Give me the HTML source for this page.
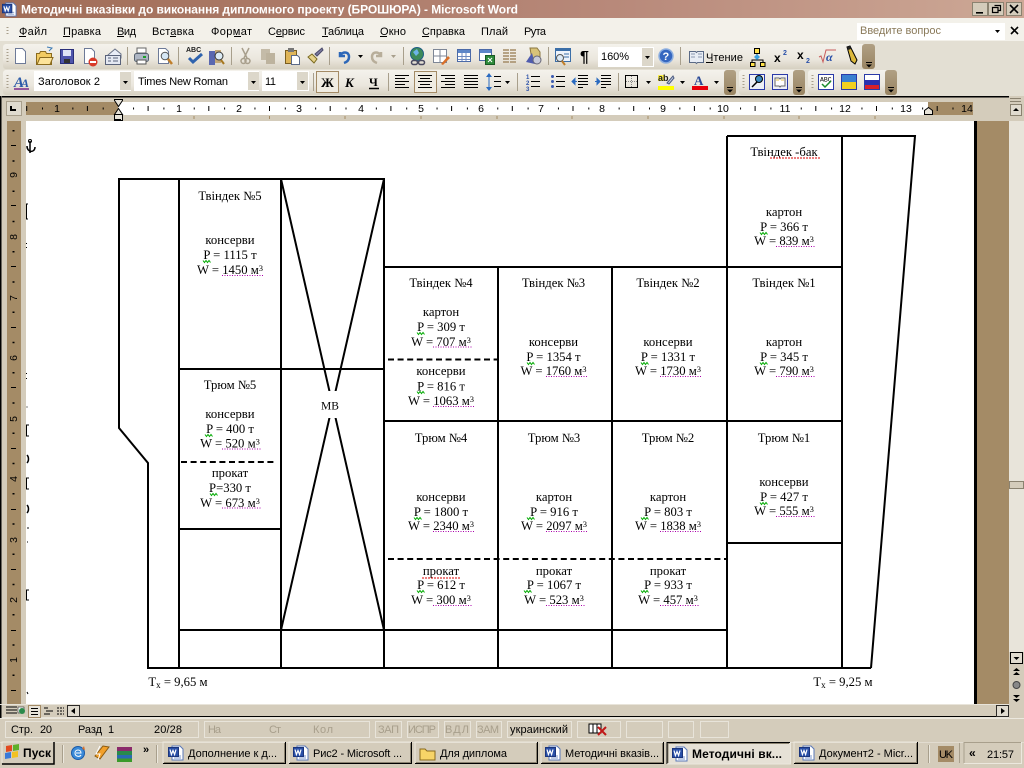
<!DOCTYPE html>
<html><head><meta charset="utf-8"><style>
html,body{margin:0;padding:0;background:#d4ccbb;width:1024px;height:768px;overflow:hidden}
svg{display:block}
.u{font-family:"Liberation Sans",sans-serif;font-size:11px;fill:#000}
.d{font-family:"Liberation Serif",serif;font-size:12.7px;fill:#000;text-anchor:middle}
.d tspan.s{font-size:8.5px}
.l{stroke:#000;stroke-width:2;fill:none}
.pd{stroke:#a0a;stroke-width:1;stroke-dasharray:1 1.5;fill:none}
.dg{stroke:#000;stroke-width:2;stroke-dasharray:6 3.6;fill:none}
.p{fill:none;stroke:#e8e4da;stroke-width:1}
.r{font-family:"Liberation Sans",sans-serif;font-size:10.5px;fill:#000;text-anchor:middle}
</style></head><body>
<svg width="1024" height="768" viewBox="0 0 1024 768" xmlns="http://www.w3.org/2000/svg">
<defs>
<linearGradient id="tt" x1="0" x2="1" y1="0" y2="0"><stop offset="0" stop-color="#a06c56"/><stop offset=".6" stop-color="#b8897a"/><stop offset="1" stop-color="#cda896"/></linearGradient>
<linearGradient id="tb" x1="0" x2="0" y1="0" y2="1"><stop offset="0" stop-color="#f4f2ec"/><stop offset=".6" stop-color="#ebe7de"/><stop offset="1" stop-color="#d6d0c1"/></linearGradient>
<linearGradient id="gr" x1="0" x2="0" y1="0" y2="1"><stop offset="0" stop-color="#b0a084"/><stop offset="1" stop-color="#998462"/></linearGradient>
<symbol id="w" viewBox="0 0 16 16" overflow="visible"><path d="M4 1h8l3 3v11H4z" fill="#fff" stroke="#5a78b8"/><path d="M6 11h7M6 13h7" stroke="#7d97cc"/><rect x="0.5" y="2.5" width="10" height="9" fill="#2a50a8" stroke="#1b357c"/><path d="M2 4.5l1.4 5 1.6-4 1.6 4 1.4-5" fill="none" stroke="#fff" stroke-width="1.2"/></symbol>
<symbol id="dd" viewBox="0 0 5 3" overflow="visible"><path d="M0 0h5L2.5 3z" fill="#000"/></symbol>
<symbol id="s" viewBox="0 0 8 3" overflow="visible"><path d="M0 .5l1.5 2 1.5-2 1.5 2 1.5-2 1.5 2" fill="none" stroke="#0a0" stroke-width="1"/></symbol>
</defs>

<rect width="1024" height="768" fill="#d4ccbb"/>

<!-- Title bar -->
<rect width="1024" height="18" fill="url(#tt)"/>
<use href="#w" x="2" y="2" width="15" height="15"/>
<text x="21" y="13.5" textLength="497" lengthAdjust="spacing" style="font:bold 12px 'Liberation Sans',sans-serif;fill:#fff">Методичні вказівки до виконання дипломного проекту (БРОШЮРА) - Microsoft Word</text>
<g>
<rect x="972.5" y="2.5" width="15" height="13" fill="#d4ccbb" stroke="#8a8270"/><path d="M976 12h7v1.6h-7z"/>
<rect x="988.5" y="2.5" width="15" height="13" fill="#d4ccbb" stroke="#8a8270"/><path d="M994.5 5.5h6v5h-2M992.5 7.5h5.5v5h-5.5z" fill="none" stroke="#000" stroke-width="1.2"/>
<rect x="1006.5" y="2.5" width="15" height="13" fill="#d4ccbb" stroke="#8a8270"/><path d="M1010 5l8 8M1018 5l-8 8" stroke="#000" stroke-width="1.6"/>
</g>

<!-- Menu -->
<rect y="18" width="1024" height="26" fill="#f3f1ea"/>
<rect x="0" y="41" width="1024" height="56" fill="#e3dfd3"/>
<path d="M7.5 27v1M7.5 30v1M7.5 33v1" stroke="#a89f8c" stroke-width="2"/>
<g>
<text x="19" y="35" textLength="28" class="u">Файл</text><path d="M19 36.500h7" stroke="#000"/>
<text x="63" y="35" textLength="38" class="u">Правка</text><path d="M63 36.500h7" stroke="#000"/>
<text x="117" y="35" textLength="19" class="u">Вид</text><path d="M117 36.500h7" stroke="#000"/>
<text x="152" y="35" textLength="42" class="u">Вставка</text><path d="M170 36.500h6" stroke="#000"/>
<text x="211" y="35" textLength="41" class="u">Формат</text><path d="M234 36.500h7" stroke="#000"/>
<text x="268" y="35" textLength="37" class="u">Сервис</text><path d="M276 36.500h6" stroke="#000"/>
<text x="322" y="35" textLength="42" class="u">Таблица</text><path d="M322 36.500h6" stroke="#000"/>
<text x="380" y="35" textLength="26" class="u">Окно</text><path d="M380 36.500h7" stroke="#000"/>
<text x="422" y="35" textLength="43" class="u">Справка</text><path d="M422 36.500h7" stroke="#000"/>
<text x="481" y="35" textLength="27" class="u">Плай</text>
<text x="524" y="35" textLength="22" class="u">Рута</text>
</g>
<rect x="857" y="23" width="148" height="17" fill="#fff"/>
<text x="860" y="34" textLength="81" style="font:11px 'Liberation Sans',sans-serif;fill:#8a7a5a">Введите вопрос</text>
<use href="#dd" x="995" y="30" width="5" height="3"/>
<path d="M1011 27l7 7M1018 27l-7 7" stroke="#000" stroke-width="1.6"/>

<!-- Toolbar 1 -->
<rect x="3" y="44" width="868" height="25" rx="3" fill="url(#tb)"/>
<rect x="862" y="44" width="13" height="25" rx="3" fill="url(#gr)"/>
<path d="M7.500 49v1M7.500 52v1M7.500 55v1M7.500 58v1M7.500 61v1" stroke="#a89f8c" stroke-width="2"/>
<path d="M866 62h6v1h-6zM866 64.500h6l-3 3z" fill="#000"/>
<!-- new -->
<path d="M15.500 48.500h7l3 3v12h-10z" fill="#fff" stroke="#6d7a98"/>
<!-- open -->
<path d="M36.500 53.500h3l1-2h5l1 2h5v11h-15z" fill="#f2cb62" stroke="#8a6a1e"/><path d="M37 64.500l3-7h13l-3 7z" fill="#fce39a" stroke="#8a6a1e"/><path d="M47 47l5 1-3 3" fill="none" stroke="#3b7ab5"/>
<!-- save -->
<rect x="60.500" y="49.500" width="13" height="14" fill="#4f55ac" stroke="#2a2f7a"/><rect x="63" y="50" width="8" height="6" fill="#dfe3f5"/><rect x="64" y="59" width="6" height="4" fill="#333"/>
<!-- permission -->
<path d="M84.500 48.500h7l3 3v12h-10z" fill="#fff" stroke="#6d7a98"/><circle cx="93" cy="62" r="4.500" fill="#d83a28"/><rect x="90" y="61" width="6" height="2" fill="#fff"/>
<!-- mail -->
<path d="M108 55l7-6 6 5v4h-13z" fill="#e9edf7" stroke="#6a7388"/><rect x="105.500" y="55.500" width="15" height="9" fill="#e4e8f2" stroke="#59627a"/><path d="M108 58h3M108 61h3M113 58h5M113 61h5" stroke="#59627a"/>
<path d="M127.500 47v18M178.500 47v18M231.500 47v18M329.500 47v18M403.500 47v18M548.500 47v18M680.500 47v18" stroke="#a89f8c"/>
<!-- print -->
<rect x="137" y="48" width="9" height="5" fill="#fff" stroke="#666"/><rect x="134.500" y="53.500" width="14" height="8" rx="2" fill="#aeb6c4" stroke="#55606e"/><rect x="137" y="60" width="9" height="4" fill="#fff" stroke="#555"/><rect x="143" y="56" width="3" height="2" fill="#1ca02a"/>
<!-- preview -->
<path d="M158.500 48.500h7l3 3v12h-10z" fill="#fff" stroke="#6d7a98"/><circle cx="165" cy="56" r="3.800" fill="#d6e7f5" stroke="#555"/><path d="M168 59l4 5" stroke="#c07e2a" stroke-width="2.500"/>
<!-- spell -->
<text x="186" y="52" style="font:bold 7px 'Liberation Sans',sans-serif;fill:#222">ABC</text><path d="M189 58l4 4 9-8" fill="none" stroke="#2f63ae" stroke-width="3"/>
<!-- research -->
<rect x="209" y="51" width="6" height="14" fill="#5a68b0"/><rect x="215" y="50" width="6" height="13" fill="#c3a878"/><circle cx="219" cy="56" r="4" fill="#dcebf5" stroke="#333"/><path d="M221 60l3 4" stroke="#a67820" stroke-width="2"/>
<!-- cut -->
<path d="M242 48l5 10M249 48l-5 10" stroke="#a89f8c" stroke-width="1.500"/><circle cx="243.500" cy="61" r="2.500" fill="none" stroke="#a89f8c" stroke-width="1.500"/><circle cx="247.500" cy="61" r="2.500" fill="none" stroke="#a89f8c" stroke-width="1.500"/>
<!-- copy -->
<rect x="261" y="49" width="9" height="11" fill="#c4bba8"/><rect x="266" y="53" width="9" height="11" fill="#bdb39e"/>
<!-- paste -->
<rect x="285.500" y="50.500" width="11" height="13" fill="#dfb558" stroke="#7a5e20"/><rect x="288" y="48" width="6" height="4" fill="#777"/><path d="M291.500 55.500h6l2 2v7h-8z" fill="#fff" stroke="#5c6a88"/>
<!-- format painter -->
<path d="M308 57l6 6 3-4-5-5z" fill="#e6d28a" stroke="#7a6a20"/><path d="M315 54l7-6 1 2-6 6z" fill="#7d7ca0" stroke="#4a4a6a"/>
<!-- undo -->
<path d="M340 52v4h5M340 55c4-4 9-3 9 2 0 3-2 5-5 6" fill="none" stroke="#2c67b8" stroke-width="2.500"/>
<use href="#dd" x="358" y="55" width="5" height="3"/>
<path d="M381 52v4h-5M381 55c-4-4-9-3-9 2 0 3 2 5 5 6" fill="none" stroke="#b8ae9a" stroke-width="2.500"/>
<path d="M391 55h5l-2.500 3z" fill="#a89f8c"/>
<!-- hyperlink -->
<circle cx="417" cy="54" r="6.500" fill="#3d8a5a" stroke="#1e5e86"/><path d="M413 52l4-3 2 4-3 3z" fill="#6db4e8"/><rect x="411.500" y="60.500" width="6" height="4" rx="2" fill="none" stroke="#4a4a60" stroke-width="1.500"/><rect x="418.500" y="60.500" width="6" height="4" rx="2" fill="none" stroke="#4a4a60" stroke-width="1.500"/>
<!-- draw table -->
<rect x="433.500" y="49.500" width="13" height="13" fill="#fff" stroke="#7d8696"/><path d="M433 56h13M440 49v13" stroke="#7d8696"/><path d="M441 64l7-8 2 2-7 7z" fill="#d9702a"/>
<!-- table -->
<rect x="457.500" y="49.500" width="13" height="12" fill="#fff" stroke="#4b6aa8"/><rect x="458" y="50" width="12" height="3" fill="#5d86c8"/><path d="M458 56.500h12M458 59.500h12M462 53v8M466 53v8" stroke="#6d8ac0"/>
<!-- excel -->
<rect x="479.500" y="49.500" width="12" height="11" fill="#fff" stroke="#4b6aa8"/><rect x="480" y="50" width="11" height="3" fill="#5d86c8"/><rect x="485.500" y="55.500" width="9" height="9" fill="#2e8b3a" stroke="#1a5a24"/><path d="M488 58l4 4M492 58l-4 4" stroke="#fff"/>
<!-- columns -->
<path d="M503 50h6M503 53h6M503 56h6M503 59h6M503 62h6M510 50h6M510 53h6M510 56h6M510 59h6M510 62h6" stroke="#a48b66" stroke-width="1.500"/>
<!-- drawing -->
<path d="M530 48l7 0 3 4v8h-8z" fill="#d8c278" stroke="#8a7640"/><path d="M526 62l6-9 3 11z" fill="#4f5cae"/><circle cx="537" cy="60" r="4" fill="#c8cbda" stroke="#667"/>
<!-- doc map -->
<rect x="555.500" y="48.500" width="15" height="13" fill="#eef3fa" stroke="#3c6fa8"/><rect x="556" y="49" width="14" height="2" fill="#3c6fa8"/><path d="M564 54h5M564 57h5" stroke="#3c6fa8"/><circle cx="560" cy="58" r="3.500" fill="#dceaf6" stroke="#555"/><path d="M562 61l3 4" stroke="#c07e2a" stroke-width="2"/>
<!-- pilcrow -->
<text x="580" y="62" style="font:bold 16px 'Liberation Sans',sans-serif;fill:#000">¶</text>
<!-- zoom box -->
<rect x="598" y="47" width="56" height="20" fill="#fff"/><rect x="642" y="48" width="11" height="18" fill="#dcd7ca"/>
<text x="601" y="60" textLength="28" class="u">160%</text>
<use href="#dd" x="645" y="56" width="5" height="3"/>
<!-- help -->
<circle cx="666" cy="56" r="7" fill="#3567c0" stroke="#8fb0e0" stroke-width="1.500"/><text x="662.500" y="60" style="font:bold 11px 'Liberation Sans',sans-serif;fill:#fff">?</text>
<!-- read -->
<path d="M689.500 51.500h6l1 1 1-1h6v11h-6l-1 1-1-1h-6z" fill="#e8edf5" stroke="#5a6a86"/><path d="M691 54h4M691 57h4M698 54h4M698 57h4" stroke="#8a98ae"/>
<text x="706" y="61" textLength="37" class="u">Чтение</text><path d="M706 62.500h7" stroke="#000"/>
<!-- diagram -->
<path d="M757 53v5M752 63v-3h11v3" fill="none" stroke="#000"/><rect x="754.500" y="48.500" width="5" height="5" fill="#ffe14a" stroke="#000"/><rect x="750.500" y="62.500" width="4.500" height="4" fill="#ffe14a" stroke="#000"/><rect x="760.500" y="62.500" width="4.500" height="4" fill="#ffe14a" stroke="#000"/><path d="M757 54l3 3-3 3-3-3z" fill="#3aa0e0"/>
<!-- x2 -->
<text x="774" y="62" style="font:bold 12px 'Liberation Sans',sans-serif">x</text><text x="783" y="55" style="font:bold 7px 'Liberation Sans',sans-serif;fill:#2a50a8">2</text>
<text x="797" y="59" style="font:bold 12px 'Liberation Sans',sans-serif">x</text><text x="806" y="63" style="font:bold 7px 'Liberation Sans',sans-serif;fill:#2a50a8">2</text>
<!-- sqrt -->
<path d="M819 57l2-1 2 6 3-12h10" fill="none" stroke="#c85c5c"/><text x="826" y="61" style="font:italic bold 12px 'Liberation Serif',serif;fill:#2a50a8">α</text>
<!-- pencil -->
<path d="M847 47l3-1 7 14-2 4-4-3z" fill="#dcb83c" stroke="#000"/><path d="M847 47l3-1 1 3-3 1z" fill="#222"/>

<!-- Toolbar 2a -->
<rect x="3" y="70" width="729" height="25" rx="3" fill="url(#tb)"/>
<rect x="724" y="70" width="12" height="25" rx="3" fill="url(#gr)"/>
<path d="M727 87h6v1h-6zM727 89.500h6l-3 3z" fill="#000"/>
<path d="M7.500 75v1M7.500 78v1M7.500 81v1M7.500 84v1M7.500 87v1" stroke="#a89f8c" stroke-width="2"/>
<text x="14" y="87" style="font:italic bold 15px 'Liberation Serif',serif;fill:#2a5aa8">A</text><text x="21" y="87" style="font:italic bold 12px 'Liberation Serif',serif;fill:#2a5aa8">A</text><path d="M14 89h15" stroke="#7a2a8a" stroke-width="1.500"/>
<rect x="34" y="71" width="97" height="20" fill="#fff"/><rect x="120" y="72" width="11" height="18" fill="#dcd7ca"/>
<rect x="134" y="71" width="125" height="20" fill="#fff"/><rect x="248" y="72" width="11" height="18" fill="#dcd7ca"/>
<rect x="262" y="71" width="47" height="20" fill="#fff"/><rect x="297" y="72" width="11" height="18" fill="#dcd7ca"/>
<use href="#dd" x="123" y="81" width="5" height="3"/><use href="#dd" x="251" y="81" width="5" height="3"/><use href="#dd" x="300" y="81" width="5" height="3"/>
<text x="38" y="85" textLength="62" class="u">Заголовок 2</text>
<text x="138" y="85" textLength="90" class="u">Times New Roman</text>
<text x="265" y="85" textLength="11" class="u">11</text>
<path d="M313.500 73v18M388.500 73v18M517.500 73v18M618.500 73v18" stroke="#a89f8c"/>
<rect x="316.500" y="71.500" width="22" height="21" fill="#f0ece2" stroke="#a48b66"/>
<text x="321" y="87" style="font:bold 13px 'Liberation Serif',serif">Ж</text>
<text x="345" y="87" style="font:italic bold 13px 'Liberation Serif',serif">К</text>
<text x="369" y="86" style="font:bold 12px 'Liberation Serif',serif">Ч</text><path d="M369 88.500h10" stroke="#000" stroke-width="1.500"/>
<path d="M395 75.500h14M395 78.500h10M395 81.500h14M395 84.500h10M395 87.500h14" stroke="#000"/>
<rect x="414.500" y="71.500" width="22" height="21" fill="#f0ece2" stroke="#a48b66"/>
<path d="M418 75.500h14M420 78.500h10M418 81.500h14M420 84.500h10M418 87.500h14" stroke="#000"/>
<path d="M441 75.500h14M445 78.500h10M441 81.500h14M445 84.500h10M441 87.500h14" stroke="#000"/>
<path d="M464 75.500h14M464 78.500h14M464 81.500h14M464 84.500h14M464 87.500h14" stroke="#000"/>
<path d="M489 73l3 4h-6zM489 91l3-4h-6z" fill="#2a6ac0"/><path d="M489 76v12" stroke="#2a6ac0"/><path d="M494 76.500h7M494 81.500h7M494 86.500h7" stroke="#000"/>
<use href="#dd" x="505" y="81" width="5" height="3"/>
<text x="526" y="79" style="font:bold 6px 'Liberation Sans',sans-serif;fill:#2a50a8">1</text><text x="526" y="85" style="font:bold 6px 'Liberation Sans',sans-serif;fill:#2a50a8">2</text><text x="526" y="91" style="font:bold 6px 'Liberation Sans',sans-serif;fill:#2a50a8">3</text>
<path d="M531 76.500h9M531 81.500h9M531 86.500h9" stroke="#000"/>
<circle cx="552.500" cy="76.500" r="1.500" fill="#3a5ab0"/><circle cx="552.500" cy="81.500" r="1.500" fill="#3a5ab0"/><circle cx="552.500" cy="86.500" r="1.500" fill="#3a5ab0"/>
<path d="M556 76.500h9M556 81.500h9M556 86.500h9" stroke="#000"/>
<path d="M578 75.500h10M578 78.500h10M578 81.500h10M578 84.500h10M578 87.500h5" stroke="#000"/><path d="M572 81.500h5M572 81.500l3-3v6z" stroke="#2a6ac0" fill="#2a6ac0"/>
<path d="M601 75.500h10M601 78.500h10M601 81.500h10M601 84.500h10M601 87.500h5" stroke="#000"/><path d="M595 81.500h5M600 81.500l-3-3v6z" stroke="#2a6ac0" fill="#2a6ac0"/>
<rect x="625.500" y="75.500" width="12" height="12" fill="none" stroke="#000"/><path d="M631.500 76v11M626 81.500h11" stroke="#888" stroke-dasharray="1 1"/>
<use href="#dd" x="646" y="81" width="5" height="3"/>
<rect x="658" y="75" width="7" height="6" fill="#fff24a"/><text x="658" y="81" style="font:bold 9px 'Liberation Sans',sans-serif;fill:#222">ab</text><path d="M667 83l6-7 1 2-5 6z" fill="#c5cde0" stroke="#4a5a80"/><rect x="658" y="86" width="16" height="4" fill="#ffff00"/>
<use href="#dd" x="680" y="81" width="5" height="3"/>
<text x="694" y="85" style="font:bold 13px 'Liberation Serif',serif;fill:#2a4a98">A</text><rect x="692" y="86" width="16" height="4" fill="#e8000c"/>
<use href="#dd" x="714" y="81" width="5" height="3"/>

<!-- Toolbar 2b -->
<rect x="739" y="70" width="62" height="25" rx="3" fill="url(#tb)"/>
<rect x="793" y="70" width="12" height="25" rx="3" fill="url(#gr)"/>
<path d="M796 87h6v1h-6zM796 89.500h6l-3 3z" fill="#000"/>
<path d="M743.500 75v1M743.500 78v1M743.500 81v1M743.500 84v1M743.500 87v1" stroke="#a89f8c" stroke-width="2"/>
<rect x="749.500" y="74.500" width="15" height="15" fill="#eef0f5" stroke="#2a3aa8"/><circle cx="759" cy="79" r="3.500" fill="#3a8ac0" stroke="#000"/><path d="M752 87l5-5" stroke="#000" stroke-width="1.500"/>
<rect x="772.500" y="74.500" width="15" height="15" fill="#eef0f5" stroke="#2a3aa8"/><path d="M775 78h4l1 1 1-1h4v8h-4l-1 1-1-1h-4z" fill="#fff" stroke="#666"/><path d="M776 80h3M781 80h3" stroke="#e3c040"/>

<!-- Toolbar 2c -->
<rect x="808" y="70" width="85" height="25" rx="3" fill="url(#tb)"/>
<rect x="885" y="70" width="12" height="25" rx="3" fill="url(#gr)"/>
<path d="M888 87h6v1h-6zM888 89.500h6l-3 3z" fill="#000"/>
<path d="M812.500 75v1M812.500 78v1M812.500 81v1M812.500 84v1M812.500 87v1" stroke="#a89f8c" stroke-width="2"/>
<rect x="818.500" y="74.500" width="15" height="15" fill="#fff" stroke="#2a3aa8"/><text x="820" y="81.500" style="font:6.500px 'Liberation Mono',monospace">ABC</text><path d="M822 84l3 3 6-6" fill="none" stroke="#1a8a2a" stroke-width="1.500"/>
<rect x="841.500" y="74.500" width="15" height="15" fill="#f2d020" stroke="#2a3aa8"/><rect x="842" y="75" width="14" height="7" fill="#3a80d0"/>
<rect x="864.500" y="74.500" width="15" height="15" fill="#fff" stroke="#2a3aa8"/><rect x="865" y="80" width="14" height="5" fill="#2a30b0"/><rect x="865" y="85" width="14" height="4" fill="#d8202a"/>

<!-- Ruler band -->
<rect x="0" y="96" width="1024" height="25" fill="#d4ccbb"/>
<rect x="2" y="96" width="1007" height="1.500" fill="#000"/>
<rect x="0" y="96" width="1.500" height="622" fill="#000"/>
<rect x="6.500" y="101.500" width="15" height="14" fill="#e0dbcf" stroke="#a89f8c"/><path d="M11 106v4h5" fill="none" stroke="#000" stroke-width="2"/>
<rect x="26" y="102" width="947" height="13" fill="#fff"/>
<rect x="26" y="102" width="92" height="13" fill="#a48b66"/>
<rect x="928" y="102" width="45" height="13" fill="#a48b66"/>
<path d="M42 108.500H970" stroke="#000" stroke-width="2" stroke-dasharray="1 29.350"/>
<path d="M26.700 106V111M87.400 106V111M148.100 106V111M208.800 106V111M269.500 106V111M330.200 106V111M390.900 106V111M451.600 106V111M512.300 106V111M573 106V111M633.700 106V111M694.400 106V111M755.100 106V111M815.800 106V111M876.500 106V111M937.200 106V111" stroke="#000"/>
<path d="M194 116V119M269.500 116V119M345 116V119M421 116V119M497 116V119M572 116V119M648 116V119M724 116V119M799 116V119M875 116V119" stroke="#a48b66"/>
<g>
<text x="57" y="112" class="r">1</text><text x="179" y="112" class="r">1</text><text x="239" y="112" class="r">2</text><text x="299" y="112" class="r">3</text><text x="361" y="112" class="r">4</text><text x="421" y="112" class="r">5</text><text x="481" y="112" class="r">6</text><text x="541" y="112" class="r">7</text><text x="602" y="112" class="r">8</text><text x="663" y="112" class="r">9</text><text x="723" y="112" class="r">10</text><text x="785" y="112" class="r">11</text><text x="845" y="112" class="r">12</text><text x="906" y="112" class="r">13</text><text x="967" y="112" class="r">14</text>
</g>
<path d="M114.500 99.500h8v1l-4 6-4-6zM114.500 114.500l4-6 4 6z" fill="#e8e4da" stroke="#000"/><rect x="114.500" y="114.500" width="8" height="6" fill="#e8e4da" stroke="#000"/>
<path d="M924.500 114.500v-4l4-3 4 3v4z" fill="#e8e4da" stroke="#000"/>
<rect x="115" y="119" width="6" height="2" fill="#000"/>

<!-- Left ruler -->
<rect x="7" y="121" width="14" height="583" fill="#a48b66"/>
<path d="M13.500 130V700" stroke="#000" stroke-width="2" stroke-dasharray="1.500 28.750"/>
<path d="M11 145.500h5M11 205.500h5M11 266.500h5M11 327.500h5M11 387.500h5M11 448.500h5M11 509.500h5M11 569.500h5M11 630.500h5M11 690.500h5" stroke="#000"/>
<g>
<text transform="translate(17,175) rotate(-90)" class="r">9</text><text transform="translate(17,237) rotate(-90)" class="r">8</text><text transform="translate(17,298) rotate(-90)" class="r">7</text><text transform="translate(17,358) rotate(-90)" class="r">6</text><text transform="translate(17,419) rotate(-90)" class="r">5</text><text transform="translate(17,479) rotate(-90)" class="r">4</text><text transform="translate(17,540) rotate(-90)" class="r">3</text><text transform="translate(17,600) rotate(-90)" class="r">2</text><text transform="translate(17,660) rotate(-90)" class="r">1</text>
</g>

<!-- Page -->
<rect x="26" y="121" width="948" height="583" fill="#fff"/>
<rect x="974" y="121" width="3" height="583" fill="#000"/>
<rect x="977" y="121" width="32" height="583" fill="#a48b66"/>

<!-- left margin fragments -->
<path d="M30 141v12M27 146c0 7 8 7 8 1" fill="none" stroke="#000" stroke-width="1.500"/><circle cx="30" cy="141" r="1.500" fill="none" stroke="#000"/>
<path d="M28 204h-1.500v15H28M26.500 243v1M26.500 247v1M26.500 373v1M26.500 378v1M26.500 407h1M29 425h-2.500v11H29M29 478h-2.500v11H29M29 590h-2.500v10H29" fill="none" stroke="#000"/>
<path d="M27 455c2 2 2 6 0 8M27 505c2 2 2 6 0 8" fill="none" stroke="#000" stroke-width="1.500"/>
<path d="M27 528h2" stroke="#888" stroke-width="2"/><path d="M27 542h1M27 692l1 2" stroke="#000"/>

<!-- Diagram -->
<g class="l">
<path d="M179 179H119V428L148 463V668H179"/>
<path d="M179 179H384V668M179 179V668M281 179V668"/>
<path d="M179 369H384M179 529H281M179 630H727M148 668H871"/>
<path d="M281 179L384 630M384 179L281 630"/>
</g>
<rect x="316" y="391" width="32" height="27" fill="#fff"/>
<text x="330" y="409.500" class="d" style="font-size:11.500px">МВ</text>
<g class="l">
<path d="M384 267H842M384 421H842M498 267V668M612 267V668M727 136V668M842 136V668M727 136H915L871 668M727 543H842"/>
</g>
<path class="dg" d="M181 462H277M388 359.500H497M388 559H727"/>

<g>
<text x="230" y="200" class="d">Твіндек №5</text><text x="230" y="244" class="d">консерви</text><text x="230" y="259" class="d">P = 1115 т</text><text x="230" y="274" class="d">W = 1450 м<tspan class="s" dy="-3">3</tspan></text>
<text x="230" y="389" class="d">Трюм №5</text><text x="230" y="418" class="d">консерви</text><text x="230" y="433" class="d">P = 400 т</text><text x="230" y="447.500" class="d">W = 520 м<tspan class="s" dy="-3">3</tspan></text>
<text x="230" y="477" class="d">прокат</text><text x="230" y="492" class="d">Р=330 т</text><text x="230" y="507" class="d">W = 673 м<tspan class="s" dy="-3">3</tspan></text>

<text x="441" y="287" class="d">Твіндек №4</text><text x="441" y="316" class="d">картон</text><text x="441" y="331" class="d">P = 309 т</text><text x="441" y="346" class="d">W = 707 м<tspan class="s" dy="-3">3</tspan></text>
<text x="441" y="375" class="d">консерви</text><text x="441" y="390.500" class="d">P = 816 т</text><text x="441" y="405" class="d">W = 1063 м<tspan class="s" dy="-3">3</tspan></text>

<text x="553.500" y="287" class="d">Твіндек №3</text><text x="553.500" y="346" class="d">консерви</text><text x="553.500" y="361" class="d">P = 1354 т</text><text x="553.500" y="375" class="d">W = 1760 м<tspan class="s" dy="-3">3</tspan></text>
<text x="668" y="287" class="d">Твіндек №2</text><text x="668" y="346" class="d">консерви</text><text x="668" y="361" class="d">P = 1331 т</text><text x="668" y="375" class="d">W = 1730 м<tspan class="s" dy="-3">3</tspan></text>
<text x="784" y="287" class="d">Твіндек №1</text><text x="784" y="346" class="d">картон</text><text x="784" y="361" class="d">P = 345 т</text><text x="784" y="375" class="d">W = 790 м<tspan class="s" dy="-3">3</tspan></text>
<text x="784" y="156" class="d">Твіндек -бак</text><text x="784" y="216" class="d">картон</text><text x="784" y="231" class="d">P = 366 т</text><text x="784" y="245" class="d">W = 839 м<tspan class="s" dy="-3">3</tspan></text>

<text x="441" y="442" class="d">Трюм №4</text><text x="441" y="501" class="d">консерви</text><text x="441" y="516" class="d">P = 1800 т</text><text x="441" y="530" class="d">W = 2340 м<tspan class="s" dy="-3">3</tspan></text>
<text x="441" y="575" class="d">прокат</text><text x="441" y="589" class="d">P = 612 т</text><text x="441" y="604" class="d">W = 300 м<tspan class="s" dy="-3">3</tspan></text>
<text x="554" y="442" class="d">Трюм №3</text><text x="554" y="501" class="d">картон</text><text x="554" y="516" class="d">P = 916 т</text><text x="554" y="530" class="d">W = 2097 м<tspan class="s" dy="-3">3</tspan></text>
<text x="554" y="575" class="d">прокат</text><text x="554" y="589" class="d">P = 1067 т</text><text x="554" y="604" class="d">W = 523 м<tspan class="s" dy="-3">3</tspan></text>
<text x="668" y="442" class="d">Трюм №2</text><text x="668" y="501" class="d">картон</text><text x="668" y="516" class="d">P = 803 т</text><text x="668" y="530" class="d">W = 1838 м<tspan class="s" dy="-3">3</tspan></text>
<text x="668" y="575" class="d">прокат</text><text x="668" y="589" class="d">P = 933 т</text><text x="668" y="604" class="d">W = 457 м<tspan class="s" dy="-3">3</tspan></text>
<text x="784" y="442" class="d">Трюм №1</text><text x="784" y="486" class="d">консерви</text><text x="784" y="501" class="d">P = 427 т</text><text x="784" y="515" class="d">W = 555 м<tspan class="s" dy="-3">3</tspan></text>

<text x="178" y="686" class="d">Т<tspan style="font-size:9px" dy="2">х</tspan><tspan dy="-2"> = 9,65 м</tspan></text>
<text x="843" y="686" class="d">Т<tspan style="font-size:9px" dy="2">х</tspan><tspan dy="-2"> = 9,25 м</tspan></text>
</g>

<!-- spelling squiggles -->
<use href="#s" x="203" y="260" width="8" height="3"/><use href="#s" x="205" y="434" width="8" height="3"/><use href="#s" x="210" y="493" width="8" height="3"/>
<use href="#s" x="417" y="332" width="8" height="3"/><use href="#s" x="417" y="391" width="8" height="3"/><use href="#s" x="527" y="362" width="8" height="3"/><use href="#s" x="641" y="362" width="8" height="3"/><use href="#s" x="760" y="362" width="8" height="3"/><use href="#s" x="760" y="232" width="8" height="3"/>
<use href="#s" x="414" y="517" width="8" height="3"/><use href="#s" x="417" y="590" width="8" height="3"/><use href="#s" x="527" y="517" width="8" height="3"/><use href="#s" x="524" y="590" width="8" height="3"/><use href="#s" x="641" y="517" width="8" height="3"/><use href="#s" x="641" y="590" width="8" height="3"/><use href="#s" x="760" y="502" width="8" height="3"/>
<path class="pd" d="M222 275.500H263M222 449H261M222 508H261M433 347H472M433 406.500H474M546 376.500H587M660 376.500H701M776 376.500H815M776 246.500H815M433 531.500H474M433 605.500H472M546 531.500H587M546 605.500H585M660 531.500H701M660 605.500H699M776 516.500H815"/>
<path d="M422 578h38M770 158h50" stroke="#d00" stroke-dasharray="2 1"/>

<!-- Vertical scrollbar -->
<rect x="1009" y="121" width="15" height="583" fill="#e8e4da"/>
<rect x="1009" y="97" width="15" height="24" fill="#d4ccbb"/>
<path d="M1010 98.500h11M1010 101.500h11" stroke="#8a8270"/>
<rect x="1010.500" y="104.500" width="11" height="11" fill="#e0dbcf" stroke="#8a8270"/><path d="M1016 108l3 3h-6z"/>
<rect x="1009.500" y="481.500" width="14" height="7" fill="#d4ccbb" stroke="#8a8270"/>
<rect x="1009" y="652" width="15" height="52" fill="#d4ccbb"/>
<rect x="1010.500" y="652.500" width="12" height="11" fill="#e0dbcf" stroke="#000"/><path d="M1016.500 660l3-3h-6z"/>
<path d="M1013 675h7M1016.500 668l3.500 3h-7zM1016.500 672l3.500 3h-7z" fill="#000"/>
<circle cx="1016.500" cy="685" r="3.500" fill="#888" stroke="#444"/>
<path d="M1013 695h7M1016.500 702l3.500-3h-7zM1016.500 698l3.500-3h-7z" fill="#000"/>

<!-- Horizontal scrollbar -->
<rect x="2" y="704" width="1007" height="14" fill="#d4ccbb"/>
<path d="M0 704.500H1009" stroke="#e8e4da"/>
<path d="M80 716.500H996" stroke="#000"/>
<path d="M2 717.500H1009" stroke="#e8e4da"/>
<path d="M6 707h11M6 710h11M6 713h11" stroke="#000"/>
<rect x="18" y="707" width="6" height="6" fill="#fff" stroke="#000" stroke-width=".5"/><circle cx="22" cy="711" r="3" fill="#2a8a4a"/>
<rect x="28.500" y="705.500" width="12" height="12" fill="#e8e4da" stroke="#a48b66"/><path d="M31 708.500h7M31 711.500h7M31 714.500h7" stroke="#000"/>
<path d="M44 708h4M46 711h7M44 714h6" stroke="#000"/>
<path d="M57 708h7M57 711h7M57 714h7" stroke="#000" stroke-dasharray="2 1"/>
<rect x="67.500" y="705.500" width="12" height="11" fill="#e0dbcf" stroke="#000" stroke-width=".8"/><path d="M71 711l4-3v6z"/>
<rect x="996.500" y="705.500" width="12" height="11" fill="#e0dbcf" stroke="#000" stroke-width=".8"/><path d="M1005 711l-4-3v6z"/>

<!-- Status bar -->
<rect x="0" y="718" width="1024" height="24" fill="#d4ccbb"/>
<path d="M0 718.500H1024" stroke="#ece8de"/>
<rect class="p" x="5.500" y="721.500" width="193" height="16"/><rect class="p" x="204.500" y="721.500" width="165" height="16"/><rect class="p" x="375.500" y="721.500" width="26" height="16"/><rect class="p" x="407.500" y="721.500" width="31" height="16"/><rect class="p" x="444.500" y="721.500" width="26" height="16"/><rect class="p" x="476.500" y="721.500" width="25" height="16"/><rect class="p" x="507.500" y="721.500" width="64" height="16"/><rect class="p" x="577.500" y="721.500" width="43" height="16"/><rect class="p" x="626.500" y="721.500" width="36" height="16"/><rect class="p" x="668.500" y="721.500" width="25" height="16"/><rect class="p" x="700.500" y="721.500" width="28" height="16"/>
<text x="11" y="733" textLength="22" class="u">Стр.</text><text x="40" y="733" textLength="12" class="u">20</text>
<text x="78" y="733" textLength="24" class="u">Разд</text><text x="108" y="733" textLength="5" class="u">1</text>
<text x="154" y="733" textLength="28" class="u">20/28</text>
<g>
<text x="208" y="733" textLength="13" class="u" style="fill:#a89f8c">На</text><text x="269" y="733" textLength="12" class="u" style="fill:#a89f8c">Ст</text><text x="313" y="733" textLength="20" class="u" style="fill:#a89f8c">Кол</text>
<text x="378" y="733" textLength="21" class="u" style="fill:#a89f8c">ЗАП</text><text x="408" y="733" textLength="28" class="u" style="fill:#a89f8c">ИСПР</text><text x="445" y="733" textLength="24" class="u" style="fill:#a89f8c">ВДЛ</text><text x="477" y="733" textLength="22" class="u" style="fill:#a89f8c">ЗАМ</text>
</g>
<text x="510" y="733" textLength="58" class="u">украинский</text>
<path d="M589 724h8v9h-8zM593 724h8v9h-8z" fill="#fff" stroke="#000"/><path d="M598 727l8 8M606 727l-8 8" stroke="#c01818" stroke-width="2"/>

<!-- Taskbar -->
<rect x="0" y="742" width="1024" height="26" fill="#d4ccbb"/>
<path d="M0 742.500H1024" stroke="#ece8de" opacity=".6"/>
<g>
<rect x="2.500" y="742.500" width="51" height="21" fill="#d4ccbb"/><path d="M2 763V742H54" stroke="#ece8de" fill="none"/><path d="M54 742V764H2" stroke="#000" fill="none" stroke-width="1.500"/>
<path d="M6 746l6 -1v6l-6 1z" fill="#e24a20"/><path d="M13 745l6-1v6l-6 1z" fill="#5fb02a"/><path d="M5 753l6-1v6l-6 1z" fill="#3a7ad8"/><path d="M12 752l6-1v6l-6 1z" fill="#f2c222"/>
<text x="23" y="757" textLength="28" style="font:bold 12px 'Liberation Sans',sans-serif">Пуск</text>

<path d="M62.500 745v18" stroke="#a89f8c"/><path d="M63.500 745v18" stroke="#ece8de"/>
<circle cx="78" cy="753" r="6.500" fill="#3a8ad8" stroke="#1a5aa8"/><path d="M75 753c0-4 6-4 6 0h-5M75 753c0 4 5 4 6 2" fill="none" stroke="#fff"/><path d="M84 746l1 4-3-1z" fill="#d8702a"/>
<path d="M95 756l8-10 6 1-9 12z" fill="#f2a02a" stroke="#8a5a10"/><path d="M100 746l-4 8h4l-2 6" fill="none" stroke="#fff"/>
<rect x="117" y="747" width="15" height="4" fill="#8a2a6a"/><rect x="117" y="751" width="15" height="4" fill="#2a8a4a"/><rect x="117" y="755" width="15" height="3.500" fill="#2a6ab0"/><rect x="117" y="758.500" width="15" height="3.500" fill="#3a9a2a"/>
<text x="143" y="753" textLength="8" style="font:bold 11px 'Liberation Sans',sans-serif">»</text>
<path d="M156.500 745v18" stroke="#a89f8c"/><path d="M157.500 745v18" stroke="#ece8de"/>

<g fill="none">
<path d="M163 763V742H285" stroke="#ece8de"/><path d="M285.500 742V763.500H163" stroke="#000"/><path d="M284.500 743V762.500H164" stroke="#8a8270"/>
<path d="M289 763V742H411" stroke="#ece8de"/><path d="M411.500 742V763.500H289" stroke="#000"/><path d="M410.500 743V762.500H290" stroke="#8a8270"/>
<path d="M415 763V742H537" stroke="#ece8de"/><path d="M537.500 742V763.500H415" stroke="#000"/><path d="M536.500 743V762.500H416" stroke="#8a8270"/>
<path d="M541 763V742H663" stroke="#ece8de"/><path d="M663.500 742V763.500H541" stroke="#000"/><path d="M662.500 743V762.500H542" stroke="#8a8270"/>
<path d="M794 763V742H917" stroke="#ece8de"/><path d="M917.500 742V763.500H794" stroke="#000"/><path d="M916.500 743V762.500H795" stroke="#8a8270"/>
</g>
<rect x="667" y="742" width="123" height="22" fill="#e6e1d6"/>
<path d="M667 764V742.500H790" stroke="#000" fill="none"/><path d="M668 763V743.500H789" stroke="#8a8270" fill="none"/><path d="M790.500 742V764H667" stroke="#ece8de" fill="none"/>

<use href="#w" x="168" y="745" width="16" height="16"/><use href="#w" x="293" y="745" width="16" height="16"/>
<path d="M420 749h5l2 2h8v9h-15z" fill="#f7d467" stroke="#8a6a1e"/>
<use href="#w" x="545" y="745" width="16" height="16"/><use href="#w" x="672" y="746" width="16" height="16"/><use href="#w" x="799" y="745" width="16" height="16"/>
<text x="188" y="757" textLength="89" class="u">Дополнение к д...</text>
<text x="313" y="757" textLength="89" class="u">Рис2 - Microsoft ...</text>
<text x="440" y="757" textLength="67" class="u">Для диплома</text>
<text x="565" y="757" textLength="94" class="u">Методичні вказів...</text>
<text x="692" y="758" textLength="90" style="font:bold 12px 'Liberation Sans',sans-serif">Методичні вк...</text>
<text x="819" y="757" textLength="94" class="u">Документ2 - Micr...</text>

<path d="M928.500 745v18" stroke="#a89f8c"/><path d="M929.500 745v18" stroke="#ece8de"/>
<rect x="938" y="746" width="16" height="16" fill="#a48b66"/>
<text x="939" y="758" textLength="14" class="u">UK</text>
<path d="M959.500 743v20" stroke="#a89f8c"/>
<path d="M964 763V742.500H1021" stroke="#a89f8c" fill="none"/><path d="M1021.500 742V763.500H964" stroke="#ece8de" fill="none"/>
<text x="969" y="757" style="font:bold 12px 'Liberation Sans',sans-serif">«</text>
<text x="987" y="758" textLength="27" class="u">21:57</text>
</g>
</svg>
</body></html>
